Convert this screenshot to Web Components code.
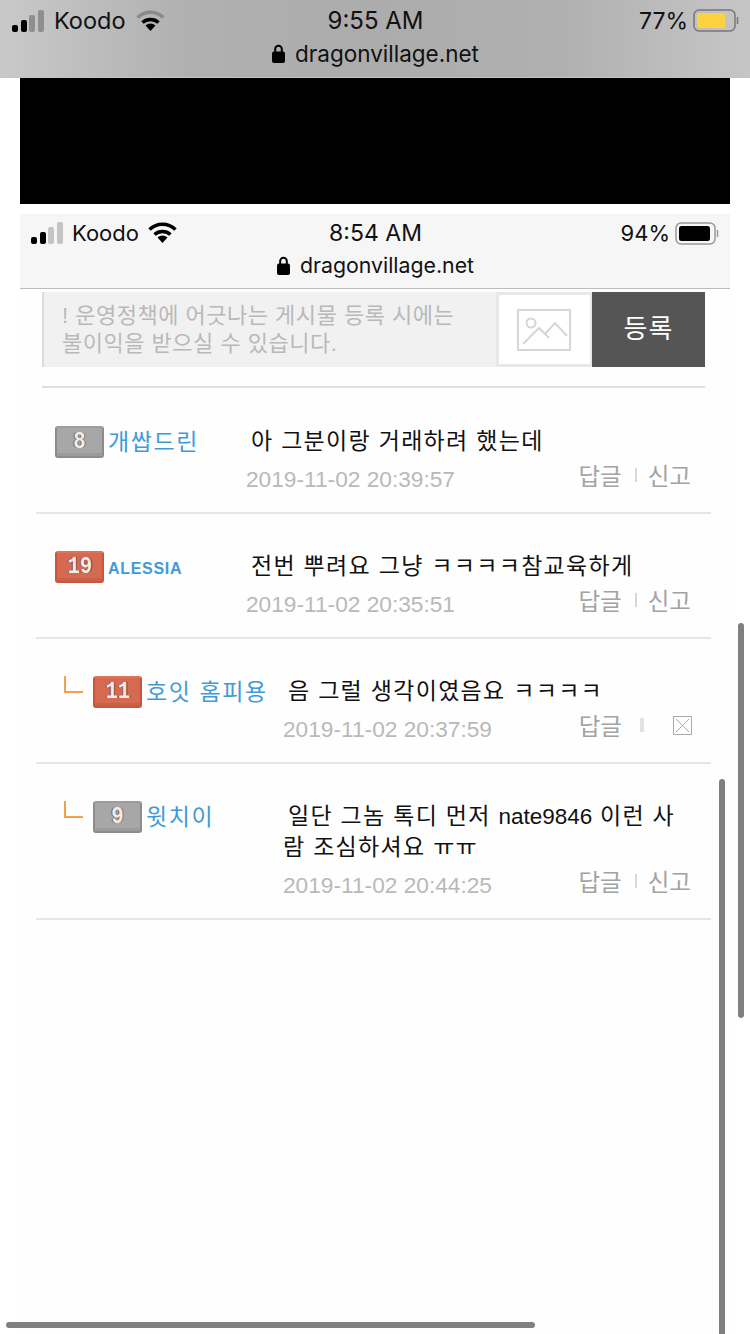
<!DOCTYPE html>
<html lang="ko">
<head>
<meta charset="utf-8">
<title>dragonvillage.net</title>
<style>
html, body { margin: 0; padding: 0; background: #fff; }
body { position: relative; width: 750px; height: 1334px; overflow: hidden; font-family: "Liberation Sans", "Noto Sans CJK KR", sans-serif; }
.latin { font-size: 22.5px; letter-spacing: 0; }
</style>
</head>
<body>
<browser-bar carrier="Koodo" time="9:55 AM" battery="77" variant="outer"></browser-bar>
<page-frame>
    <browser-bar carrier="Koodo" time="8:54 AM" battery="94" variant="inner"></browser-bar>
    <comment-form></comment-form>
    <comment-row level="8" tone="gray" name="개쌉드린" date="2019-11-02 20:39:57">아 그분이랑 거래하려 했는데</comment-row>
    <comment-row level="19" tone="red" name="ALESSIA" small date="2019-11-02 20:35:51">전번 뿌려요 그냥 ㅋㅋㅋㅋ참교육하게</comment-row>
    <comment-row level="11" tone="red" name="호잇 홈피용" reply own date="2019-11-02 20:37:59">음 그럴 생각이였음요 ㅋㅋㅋㅋ</comment-row>
    <comment-row level="9" tone="gray" name="윗치이" reply date="2019-11-02 20:44:25">일단 그놈 톡디 먼저 <span class="latin">nate9846</span> 이런 사<br>람 조심하셔요 ㅠㅠ</comment-row>
</page-frame>
<overlay-bar style="left:738px;top:623px;width:6px;height:395px"></overlay-bar>
<overlay-bar style="left:719px;top:779px;width:6px;height:560px"></overlay-bar>
<overlay-bar style="left:6px;top:1322px;width:529px;height:6px"></overlay-bar>

<script>
customElements.define('browser-bar', class extends HTMLElement {
    constructor() {
        super();
        this.attachShadow({ mode: 'open' });
    }

    connectedCallback() {
        const outer = this.getAttribute('variant') === 'outer';
        const pct = this.getAttribute('battery');
        const dim = outer ? '#8f8f8f' : '#c4c4c4';
        const wifiBack = outer ? '#8a8a8a' : '#000';
        const fill = outer ? '#fdd23e' : '#000';
        const fillW = outer ? 28 : 31;
        const rim = outer ? '#777' : '#999';
        const battW = outer ? 46 : 45;

        this.shadowRoot.innerHTML = `
        <style>
        :host {
            display: block;
            box-sizing: border-box;
            height: ${ outer ? 78 : 75 }px;
            font-family: Inter, "Liberation Sans", sans-serif;
            color: #111;
            background: ${ outer ? 'linear-gradient(90deg, #c9c9c9 0, #b0b0b0 25%, #acacac 50%, #b0b0b0 75%, #c6c6c6 100%)' : '#f6f6f6' };
            border-bottom: ${ outer ? '1px solid #c4c4c4' : '1px solid #bdbdbd' };
            padding: ${ outer ? '6px 11px 0 12px' : '5px 10px 0 11px' };
        }
        .top {
            display: grid;
            grid-template-columns: 1fr auto 1fr;
            align-items: center;
            height: 26px;
            font-size: 23px;
        }
        .time { font-size: ${ outer ? 24 : 23 }px; }
        .left, .right { display: flex; align-items: center; }
        .left { gap: ${ outer ? 10 : 9 }px; }
        .right { justify-content: flex-end; gap: 5px; font-size: ${ outer ? 23 : 22 }px; }
        .carrier { font-size: ${ outer ? 23.5 : 22 }px; }
        .url {
            display: flex;
            align-items: center;
            justify-content: center;
            gap: 10px;
            margin-top: ${ outer ? 7 : 6 }px;
            height: 28px;
            font-size: ${ outer ? 22.5 : 21.3 }px;
        }
        svg { display: block; }
        </style>
        <div class="top">
            <div class="left">
                <svg width="32" height="22" viewBox="0 0 32 22">
                    <rect x="0" y="15" width="6" height="7" rx="2" fill="#000"/>
                    <rect x="9" y="10" width="6" height="12" rx="2" fill="#000"/>
                    <rect x="17" y="5" width="6" height="17" rx="2" fill="${ dim }"/>
                    <rect x="26" y="0" width="6" height="22" rx="2" fill="${ dim }"/>
                </svg>
                <span class="carrier">${ this.getAttribute('carrier') }</span>
                <svg width="29" height="22" viewBox="0 0 29 22">
                    <path d="M1.500 7.500C9 .5 20 .5 27.500 7.500" fill="none" stroke="${ wifiBack }" stroke-width="3.500"/>
                    <path d="M6.500 12.500C11 8.500 18 8.500 22.500 12.500" fill="none" stroke="#000" stroke-width="3.500"/>
                    <path d="M9.500 15.500C12.500 12.800 16.500 12.800 19.500 15.500L14.500 21Z" fill="#000"/>
                </svg>
            </div>
            <span class="time">${ this.getAttribute('time') }</span>
            <div class="right">
                <span>${ pct }%</span>
                <svg width="${ battW }" height="23" viewBox="0 0 ${ battW } 23">
                    <rect x="1" y="1" width="${ outer ? 41 : 39 }" height="21" rx="5" fill="none" stroke="${ rim }" stroke-width="1.500"/>
                    <rect x="4" y="4" width="${ fillW }" height="15" rx="2.500" fill="${ fill }"/>
                    <path d="M${ outer ? 44.500 : 42.500 } 8v7" stroke="${ rim }" stroke-width="1.500" fill="none"/>
                </svg>
            </div>
        </div>
        <div class="url">
            <svg width="13" height="19" viewBox="0 0 13 19">
                <path d="M3.200 8V5a3.300 3.300 0 0 1 6.600 0v3" fill="none" stroke="#000" stroke-width="2"/>
                <rect x="0" y="7.500" width="13" height="11.500" rx="2" fill="#000"/>
            </svg>
            <span>dragonvillage.net</span>
        </div>
        `;
    }
});

customElements.define('page-frame', class extends HTMLElement {
    constructor() {
        super();
        this.attachShadow({ mode: 'open' }).innerHTML = `
        <style>
        :host { display: block; padding: 0 20px; }
        .banner { height: 126px; margin-bottom: 10px; background: #000; }
        .body { background: #fefefe; min-height: 1120px; }
        </style>
        <div class="banner"></div>
        <div class="body"><slot></slot></div>
        `;
    }
});

customElements.define('comment-form', class extends HTMLElement {
    constructor() {
        super();
        this.attachShadow({ mode: 'open' }).innerHTML = `
        <style>
        :host {
            display: block;
            margin: 3px 25px 1px 22px;
            padding-bottom: 19px;
            border-bottom: 2px solid #dedede;
        }
        .form { display: flex; height: 75px; }
        .text {
            box-sizing: border-box;
            width: 454px;
            padding: 10px 0 0 18px;
            background: #f1f1f1;
            border-left: 2px solid #dcdcdc;
            color: #b9b9b9;
            font: 22px/28px "Liberation Sans", "Noto Sans CJK KR", sans-serif;
            letter-spacing: .5px;
            white-space: nowrap;
        }
        .pic {
            box-sizing: border-box;
            display: flex;
            align-items: center;
            justify-content: center;
            width: 96px;
            background: #fff;
            border: 3px solid #e8e8e8;
            border-right-width: 2px;
            padding-right: 2px;
        }
        .send {
            flex: 1;
            display: flex;
            align-items: center;
            justify-content: center;
            padding-bottom: 6px;
            background: #555;
            color: #fff;
            font: 26px/32px "Noto Sans CJK KR", sans-serif;
            letter-spacing: 1px;
        }
        </style>
        <div class="form">
            <div class="text">! 운영정책에 어긋나는 게시물 등록 시에는<br>불이익을 받으실 수 있습니다.</div>
            <div class="pic">
                <svg width="54" height="42" viewBox="0 0 54 42" fill="none" stroke="#d6d6d6" stroke-width="2">
                    <rect x="1" y="1" width="52" height="40"/>
                    <circle cx="14" cy="14" r="4.500"/>
                    <path d="M6 35L22 19L32 29M28 25L38 14L50 27"/>
                </svg>
            </div>
            <div class="send">등록</div>
        </div>
        `;
    }
});

customElements.define('level-badge', class extends HTMLElement {
    constructor() {
        super();
        this.attachShadow({ mode: 'open' });
    }

    connectedCallback() {
        const red = this.getAttribute('tone') === 'red';
        const edge = red ? '#8a4f40' : '#747474';
        this.shadowRoot.innerHTML = `
        <style>
        :host {
            flex: none;
            box-sizing: border-box;
            display: flex;
            align-items: center;
            justify-content: center;
            width: 49px;
            height: 32px;
            border-radius: 3px;
            background: ${ red ? '#d66a50' : '#a7a7a7' };
            border: 2px solid ${ red ? '#c9553c' : '#8c8c8c' };
            border-top-color: ${ red ? '#d8755c' : '#9c9c9c' };
            box-shadow: inset 0 -3px 0 ${ red ? '#c9604a' : '#9c9c9c' };
        }
        span {
            display: block;
            transform: scale(1.15, 1.3);
            color: #f3e9e5;
            font: bold 18px/18px "Liberation Mono", monospace;
            text-shadow: 1px 0 0 ${ edge }, -1px 0 0 ${ edge };
        }
        </style>
        <span>${ this.getAttribute('level') }</span>
        `;
    }
});

customElements.define('comment-row', class extends HTMLElement {
    constructor() {
        super();
        this.attachShadow({ mode: 'open' });
    }

    connectedCallback() {
        const reply = this.hasAttribute('reply');
        const own = this.hasAttribute('own');
        const small = this.hasAttribute('small');
        const tool = own
            ? `<i class="bar wide"></i>
               <svg width="19" height="19" viewBox="0 0 19 19" fill="none" stroke="#ababab" stroke-width="1"><rect x=".5" y=".5" width="18" height="18"/><path d="M3 3L16 16M16 3L3 16"/></svg>`
            : `<i class="bar"></i><span>신고</span>`;

        this.shadowRoot.innerHTML = `
        <style>
        :host {
            display: block;
            margin: 0 19px 0 16px;
            border-bottom: 2px solid #e6e6e6;
            padding: 37px 20px 0 ${ reply ? 28 : 19 }px;
            box-sizing: border-box;
        }
        .row { display: flex; align-items: flex-start; }
        .who {
            flex: none;
            width: ${ reply ? 219 : 191 }px;
            display: flex;
            align-items: flex-start;
        }
        .elbow {
            flex: none;
            width: 19px;
            height: 17px;
            margin-right: 10px;
            border-left: 2px solid #f2a04e;
            border-bottom: 2px solid #f2a04e;
            box-sizing: border-box;
        }
        .name {
            margin-left: 4px;
            color: #3f9bd8;
            font: ${ small ? 'bold 16px/35px "Liberation Sans", sans-serif' : '23px/28px "Noto Sans CJK KR", sans-serif' };
            letter-spacing: ${ small ? '.7px' : '1.6px' };
            white-space: nowrap;
        }
        .main { flex: 1; min-width: 0; }
        .text {
            padding-right: 8px;
            text-indent: 5px;
            color: #111;
            font: 23px/30px "Liberation Sans", "Noto Sans CJK KR", sans-serif;
            letter-spacing: 1.3px;
            word-break: break-all;
        }
        .meta {
            display: flex;
            justify-content: space-between;
            align-items: center;
            margin-top: 8px;
            padding-bottom: 18px;
            height: 30px;
        }
        .date { color: #b9b9b9; font-size: 22.700px; }
        .acts {
            display: flex;
            align-items: center;
            color: #a3a3a3;
            font: 23.500px/28px "Noto Sans CJK KR", sans-serif;
            position: relative;
            top: -4px;
            ${ own ? 'right: -1px;' : '' }
        }
        .bar { width: 2px; height: 14px; margin: 0 11px 0 13px; background: #d8d8d8; }
        .bar.wide { width: 4px; margin: 0 29px 0 18px; background: #e2e2e2; }
        svg { display: block; }
        </style>
        <div class="row">
            <div class="who">
                ${ reply ? '<i class="elbow"></i>' : '' }
                <level-badge level="${ this.getAttribute('level') }" tone="${ this.getAttribute('tone') }"></level-badge>
                <span class="name">${ this.getAttribute('name') }</span>
            </div>
            <div class="main">
                <div class="text"><slot></slot></div>
                <div class="meta">
                    <span class="date">${ this.getAttribute('date') }</span>
                    <span class="acts"><span>답글</span>${ tool }</span>
                </div>
            </div>
        </div>
        `;
    }
});

customElements.define('overlay-bar', class extends HTMLElement {
    constructor() {
        super();
        this.attachShadow({ mode: 'open' }).innerHTML = `
        <style>
        :host { display: block; position: absolute; background: #808080; border-radius: 3px; }
        </style>
        `;
    }
});
</script>
</body>
</html>
